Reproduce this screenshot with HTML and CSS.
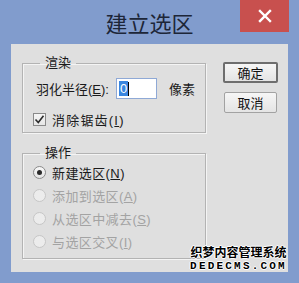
FILE: index.html
```html
<!DOCTYPE html>
<html lang="zh-CN">
<head>
  <meta charset="UTF-8">
  <title>建立选区</title>
  <link rel="stylesheet" href="styles.css">
</head>
<body>

  <div class="titlebar">
    <span></span>
    <h1 class="title">建立选区</h1>
    <button class="close-btn" aria-label="关闭">
      <svg width="14" height="14" viewBox="0 0 14 14">
        <path d="M2 2 L12 12 M12 2 L2 12" stroke="#fff" stroke-width="2.4" stroke-linecap="square"/>
      </svg>
    </button>
  </div>

  <div class="panel">
    <div class="left-col">
      <fieldset class="group">
        <legend>渲染</legend>
        <div class="feather-row">
          <label for="feather">羽化半径(<u>E</u>):</label>
          <div class="input-box" id="feather"><span class="sel">0</span><span class="caret"></span></div>
          <span class="unit">像素</span>
        </div>
        <div class="check-row">
          <span class="checkbox">
            <svg width="11" height="11" viewBox="0 0 11 11">
              <path d="M1.5 5.5 L4.3 8.5 L9.5 1.8" fill="none" stroke="#2b2b2b" stroke-width="1.6"/>
            </svg>
          </span>
          <span>消除锯齿(<u>I</u>)</span>
        </div>
      </fieldset>

      <fieldset class="group ops">
        <legend>操作</legend>
        <div class="radio-row"><span class="radio checked"></span><span>新建选区(<u>N</u>)</span></div>
        <div class="radio-row disabled"><span class="radio"></span><span>添加到选区(<u>A</u>)</span></div>
        <div class="radio-row disabled"><span class="radio"></span><span>从选区中减去(<u>S</u>)</span></div>
        <div class="radio-row disabled"><span class="radio"></span><span>与选区交叉(<u>I</u>)</span></div>
      </fieldset>
    </div>

    <div class="right-col">
      <button class="btn default">确定</button>
      <button class="btn">取消</button>
    </div>

    <div class="watermark">
      <div class="wm-cn">织梦内容管理系统</div>
      <div class="wm-en">DEDECMS.COM</div>
    </div>
  </div>

</body>
</html>
```

FILE: styles.css
```css
body {
  margin: 0;
  width: 299px;
  height: 283px;
  background-color: #819ccd;
  font-family: "Liberation Sans", "Noto Sans CJK SC", sans-serif;
  font-size: 13px;
  color: #1a1a1a;
  overflow: hidden;
}
.titlebar {
  display: grid;
  grid-template-columns: 1fr auto 1fr;
  height: 44px;
}
.title {
  margin: 0;
  padding-top: 7px;
  font-family: "Noto Sans CJK SC", sans-serif;
  font-size: 22px;
  font-weight: normal;
  line-height: 30px;
  color: #1d2638;
}
.close-btn {
  justify-self: end;
  width: 49px;
  height: 32px;
  margin-right: 10px;
  padding: 0;
  border: none;
  background-color: #c8504e;
  display: flex;
  align-items: center;
  justify-content: center;
}
.panel {
  position: relative;
  display: flex;
  height: 228px;
  margin: 0 11px;
  padding: 12px 0 0 11px;
  box-sizing: border-box;
  background-color: #dfdfdf;
}
.left-col {
  width: 184px;
}
.group {
  margin: 0;
  padding: 0 0 6px 0;
  border: 1px solid #b3b3b3;
  box-shadow: inset 1px 1px 0 #f4f4f4, 1px 1px 0 #f4f4f4;
}
.group legend {
  margin-left: 17px;
  padding: 0 5px;
  line-height: 14px;
}
.feather-row {
  display: flex;
  align-items: center;
  margin-top: 8px;
  padding-left: 13px;
}
.feather-row label {
  width: 80px;
}
.input-box {
  display: flex;
  align-items: center;
  width: 37px;
  height: 19px;
  padding-left: 2px;
  border: 1px solid #8fa9d6;
  background-color: #fff;
}
.sel {
  background-color: #3a86e0;
  color: #fff;
  line-height: 15px;
  padding: 0 1px;
}
.caret {
  width: 1px;
  height: 14px;
  background-color: #000;
}
.unit {
  margin-left: 12px;
}
.check-row {
  display: flex;
  align-items: center;
  gap: 6px;
  height: 14px;
  margin-top: 13px;
  padding-left: 10px;
  letter-spacing: 1.2px;
}
.checkbox {
  display: flex;
  align-items: center;
  justify-content: center;
  width: 11px;
  height: 11px;
  border: 1px solid #8a8a8a;
  background: linear-gradient(#f6f6f6, #e6e6e6);
}
.ops {
  margin-top: 13px;
  padding-bottom: 5px;
}
.radio-row {
  display: flex;
  align-items: center;
  gap: 6px;
  height: 23px;
  padding-left: 10px;
  letter-spacing: 0.4px;
}
.radio-row:first-of-type {
  margin-top: 1px;
}
.radio {
  display: flex;
  align-items: center;
  justify-content: center;
  width: 11px;
  height: 11px;
  border: 1px solid #8a8a8a;
  border-radius: 50%;
  background: linear-gradient(#f8f8f8, #e4e4e4);
}
.radio.checked::after {
  content: "";
  width: 5px;
  height: 5px;
  border-radius: 50%;
  background-color: #2a2a2a;
}
.disabled {
  color: #a3a3a3;
}
.disabled .radio {
  border-color: #c6c6c6;
  background: #ececec;
}
.right-col {
  display: flex;
  flex-direction: column;
  align-items: center;
  gap: 9px;
  margin-left: 17px;
  padding-top: 6px;
}
.btn {
  width: 53px;
  height: 21px;
  padding: 0;
  font-family: "Noto Sans CJK SC", sans-serif;
  font-size: 13px;
  line-height: 17px;
  color: #111;
  border: 1px solid #a2a2a2;
  border-radius: 2px;
  background: linear-gradient(#f6f6f6, #e4e4e4);
}
.btn.default {
  width: 55px;
  height: 21px;
  border: 2px solid #6e6e6e;
}
.watermark {
  position: absolute;
  right: 0;
  bottom: 0;
  width: 99px;
  text-align: center;
  font-weight: bold;
  color: #000;
  text-shadow: 1px 0 0 #fff, -1px 0 0 #fff, 0 1px 0 #fff, 0 -1px 0 #fff;
}
.wm-cn {
  font-family: "Noto Sans CJK SC", sans-serif;
  font-size: 12px;
  line-height: 12px;
  margin-bottom: 4px;
}
.wm-en {
  font-family: "Liberation Mono", monospace;
  font-size: 11px;
  line-height: 9px;
  letter-spacing: 2.2px;
  margin-bottom: 1px;
}
```
